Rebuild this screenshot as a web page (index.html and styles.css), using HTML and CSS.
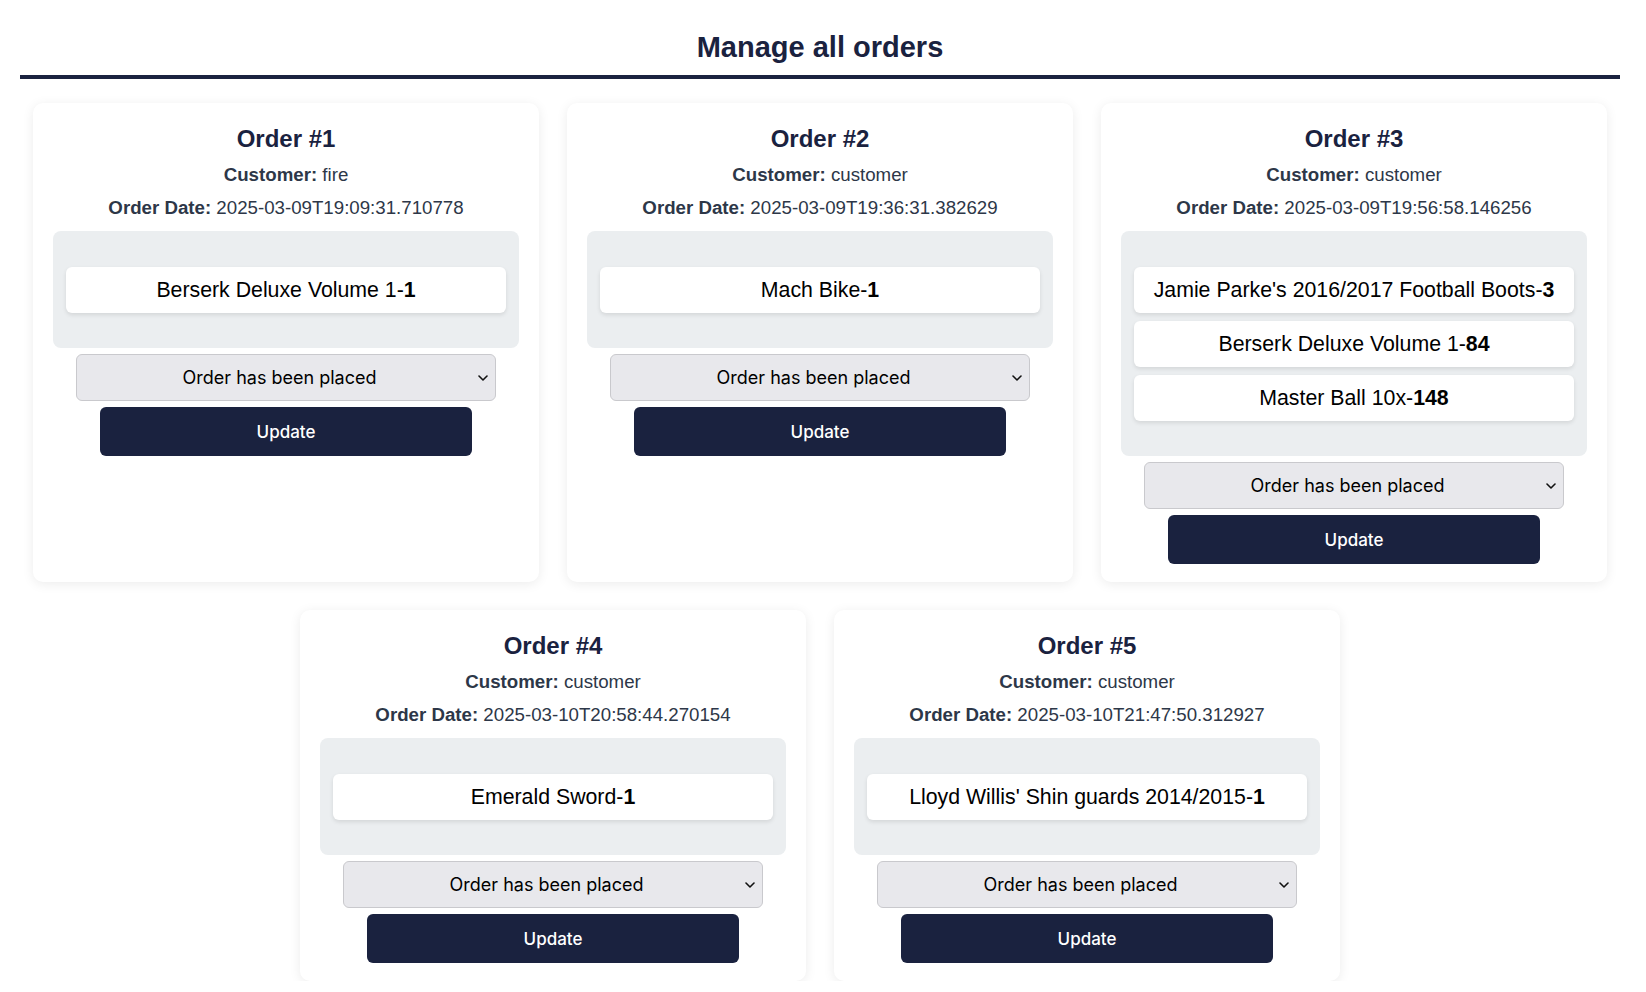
FILE: index.html
```html
<!DOCTYPE html>
<html lang="en">
<head>
<meta charset="utf-8">
<title>Manage all orders</title>
<link rel="stylesheet" href="styles.css">
</head>
<body>
<div class="page">
  <h1 class="page-title">Manage all orders</h1>
  <div class="orders">

    <div class="card">
      <h2 class="card-title">Order #1</h2>
      <p class="meta"><strong>Customer:</strong> fire</p>
      <p class="meta"><strong>Order Date:</strong> 2025-03-09T19:09:31.710778</p>
      <div class="items">
        <div class="item">Berserk Deluxe Volume 1-<b>1</b></div>
      </div>
      <div class="select-wrap">
        <select class="status"><option>Order has been placed</option></select>
        <svg class="chev" width="10" height="6" viewBox="0 0 10 6"><polyline points="1,1 5,5 9,1" fill="none" stroke="#111" stroke-width="1.6" stroke-linecap="round" stroke-linejoin="round"/></svg>
      </div>
      <button class="update">Update</button>
    </div>

    <div class="card">
      <h2 class="card-title">Order #2</h2>
      <p class="meta"><strong>Customer:</strong> customer</p>
      <p class="meta"><strong>Order Date:</strong> 2025-03-09T19:36:31.382629</p>
      <div class="items">
        <div class="item">Mach Bike-<b>1</b></div>
      </div>
      <div class="select-wrap">
        <select class="status"><option>Order has been placed</option></select>
        <svg class="chev" width="10" height="6" viewBox="0 0 10 6"><polyline points="1,1 5,5 9,1" fill="none" stroke="#111" stroke-width="1.6" stroke-linecap="round" stroke-linejoin="round"/></svg>
      </div>
      <button class="update">Update</button>
    </div>

    <div class="card">
      <h2 class="card-title">Order #3</h2>
      <p class="meta"><strong>Customer:</strong> customer</p>
      <p class="meta"><strong>Order Date:</strong> 2025-03-09T19:56:58.146256</p>
      <div class="items">
        <div class="item">Jamie Parke's 2016/2017 Football Boots-<b>3</b></div>
        <div class="item">Berserk Deluxe Volume 1-<b>84</b></div>
        <div class="item">Master Ball 10x-<b>148</b></div>
      </div>
      <div class="select-wrap">
        <select class="status"><option>Order has been placed</option></select>
        <svg class="chev" width="10" height="6" viewBox="0 0 10 6"><polyline points="1,1 5,5 9,1" fill="none" stroke="#111" stroke-width="1.6" stroke-linecap="round" stroke-linejoin="round"/></svg>
      </div>
      <button class="update">Update</button>
    </div>

    <div class="card">
      <h2 class="card-title">Order #4</h2>
      <p class="meta"><strong>Customer:</strong> customer</p>
      <p class="meta"><strong>Order Date:</strong> 2025-03-10T20:58:44.270154</p>
      <div class="items">
        <div class="item">Emerald Sword-<b>1</b></div>
      </div>
      <div class="select-wrap">
        <select class="status"><option>Order has been placed</option></select>
        <svg class="chev" width="10" height="6" viewBox="0 0 10 6"><polyline points="1,1 5,5 9,1" fill="none" stroke="#111" stroke-width="1.6" stroke-linecap="round" stroke-linejoin="round"/></svg>
      </div>
      <button class="update">Update</button>
    </div>

    <div class="card">
      <h2 class="card-title">Order #5</h2>
      <p class="meta"><strong>Customer:</strong> customer</p>
      <p class="meta"><strong>Order Date:</strong> 2025-03-10T21:47:50.312927</p>
      <div class="items">
        <div class="item">Lloyd Willis' Shin guards 2014/2015-<b>1</b></div>
      </div>
      <div class="select-wrap">
        <select class="status"><option>Order has been placed</option></select>
        <svg class="chev" width="10" height="6" viewBox="0 0 10 6"><polyline points="1,1 5,5 9,1" fill="none" stroke="#111" stroke-width="1.6" stroke-linecap="round" stroke-linejoin="round"/></svg>
      </div>
      <button class="update">Update</button>
    </div>

  </div>
</div>
</body>
</html>
```

FILE: styles.css
```css
html, body {
  margin: 0;
  padding: 0;
  background: #ffffff;
  overflow: hidden;
}

body {
  font-family: "Liberation Sans", Arial, sans-serif;
  color: #2d3748;
}

.page {
  width: 1600px;
  margin-left: 20px;
  padding-top: 30px;
}

.page-title {
  margin: 0;
  font-size: 29px;
  line-height: 34px;
  font-weight: 700;
  color: #1a223f;
  text-align: center;
  padding-bottom: 11px;
  border-bottom: 4px solid #1a223f;
}

.orders {
  margin-top: 24px;
  display: flex;
  flex-wrap: wrap;
  justify-content: center;
  gap: 28px;
}

.card {
  width: 506px;
  box-sizing: border-box;
  padding: 22px 20px 18px;
  background: #fff;
  border-radius: 10px;
  box-shadow: 0 2px 12px rgba(0, 0, 0, 0.08);
  display: flex;
  flex-direction: column;
  align-items: center;
}

.card-title {
  margin: 0 0 11px;
  font-size: 24px;
  line-height: 28px;
  font-weight: 700;
  color: #1a223f;
  text-align: center;
}

.meta {
  margin: 0 0 11px;
  font-size: 18.7px;
  line-height: 22px;
  color: #2d3748;
  text-align: center;
}

.meta strong {
  font-weight: 700;
}

.items {
  align-self: stretch;
  margin-top: 1px;
  background: #ebeef0;
  border-radius: 8px;
  padding: 36px 13px 35px;
  display: flex;
  flex-direction: column;
  gap: 8px;
}

.item {
  background: #fff;
  border-radius: 6px;
  box-shadow: 0 2px 4px rgba(0, 0, 0, 0.1);
  padding: 11px 10px;
  font-size: 21.3px;
  line-height: 24px;
  color: #000;
  text-align: center;
}

.item b {
  font-weight: 700;
}

.select-wrap {
  position: relative;
  width: 90%;
  margin-top: 6px;
}

.status {
  -webkit-appearance: none;
  appearance: none;
  width: 100%;
  height: 47px;
  box-sizing: border-box;
  background: #e8e8ec;
  border: 1px solid #c9c9cd;
  border-radius: 6px;
  font-family: Inter, "Liberation Sans", sans-serif;
  font-size: 18px;
  color: #000;
  text-align: center;
  text-align-last: center;
  padding: 0 24px 0 11px;
}

.chev {
  position: absolute;
  right: 8px;
  top: 21px;
  pointer-events: none;
}

.update {
  width: 80%;
  height: 49px;
  margin-top: 6px;
  background: #1a223f;
  color: #fff;
  border: none;
  border-radius: 6px;
  font-family: Inter, "Liberation Sans", sans-serif;
  font-size: 17px;
  font-weight: 500;
}
```
